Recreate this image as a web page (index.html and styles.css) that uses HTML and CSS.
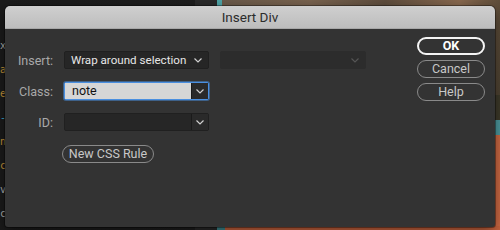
FILE: index.html
```html
<!DOCTYPE html>
<html>
<head>
<meta charset="utf-8">
<link rel="stylesheet" href="styles.css">
</head>
<body>
<div class="desktop">
  <div class="bg-photo"></div>
  <div class="bg-teal-top"></div>
  <div class="bg-right"></div>
  <div class="bg-bottom"></div>
  <div class="code">
    <span class="c1">x</span>
    <span class="c2">a</span>
    <span class="c2">e</span>
    <span class="c3">-</span>
    <span class="c2">n</span>
    <span class="c2">c</span>
    <span class="c1">v</span>
    <span class="c1">c</span>
  </div>
  <div class="dialog">
    <div class="titlebar">Insert Div</div>
    <div class="body">
      <div class="form">
        <div class="row">
          <span class="label">Insert:</span>
          <div class="select">
            <span class="value">Wrap around selection</span>
            <svg class="chev" width="8" height="5" viewBox="0 0 8 5"><polyline points="0.5,0.5 4,4 7.5,0.5" fill="none" stroke="#cfcfcf" stroke-width="1.2"/></svg>
          </div>
          <div class="select disabled">
            <span class="value"></span>
            <svg class="chev" width="8" height="5" viewBox="0 0 8 5"><polyline points="0.5,0.5 4,4 7.5,0.5" fill="none" stroke="#555" stroke-width="1.2"/></svg>
          </div>
        </div>
        <div class="row">
          <span class="label">Class:</span>
          <div class="combo focus">
            <span class="field">note</span>
            <span class="btn"><svg width="8" height="5" viewBox="0 0 8 5"><polyline points="0.5,0.5 4,4 7.5,0.5" fill="none" stroke="#d0d0d0" stroke-width="1.2"/></svg></span>
          </div>
        </div>
        <div class="row">
          <span class="label">ID:</span>
          <div class="combo">
            <span class="field"></span>
            <span class="btn"><svg width="8" height="5" viewBox="0 0 8 5"><polyline points="0.5,0.5 4,4 7.5,0.5" fill="none" stroke="#d0d0d0" stroke-width="1.2"/></svg></span>
          </div>
        </div>
        <div class="row">
          <span class="label"></span>
          <button class="pill newrule">New CSS Rule</button>
        </div>
      </div>
      <div class="buttons">
        <button class="pill primary">OK</button>
        <button class="pill">Cancel</button>
        <button class="pill">Help</button>
      </div>
    </div>
  </div>
</div>
</body>
</html>
```

FILE: styles.css
```css
* { box-sizing: border-box; }
html, body { margin: 0; padding: 0; }
body {
  width: 500px;
  height: 230px;
  overflow: hidden;
  background: #1c1c1c;
  font-family: Roboto, "Liberation Sans", Arial, sans-serif;
}
.desktop {
  position: relative;
  width: 500px;
  height: 230px;
  background: linear-gradient(90deg, #1b1b1b 0, #1e1e1e 195px, #2a2a2a 195px, #2a2a2a 217px);
}
.bg-photo {
  position: absolute;
  left: 222px; top: 0;
  width: 278px; height: 110px;
  background: linear-gradient(100deg, #6b5a4a 0%, #7a6450 30%, #5f4e3e 55%, #8a6a50 80%, #4a4030 100%);
}
.bg-teal-top {
  position: absolute;
  left: 217px; top: 0;
  width: 5px; height: 10px;
  background: #4fa6a8;
}
.bg-right {
  position: absolute;
  left: 490px; top: 95px;
  width: 10px; height: 135px;
  background: linear-gradient(180deg, #3e3a2a 0, #3e3a2a 25px, #4d9aa0 25px, #4d9aa0 40px, #cf6a44 40px);
}
.bg-bottom {
  position: absolute;
  left: 217px; top: 226px;
  width: 283px; height: 4px;
  background: linear-gradient(90deg, #3d8a8f 0, #3d8a8f 8px, #c9643e 8px);
}
.code {
  position: absolute;
  left: 0; top: 40px;
  width: 6px;
  display: flex;
  flex-direction: column;
  gap: 12px;
  font-family: "DejaVu Sans Mono", monospace;
  font-size: 10px;
  line-height: 12px;
}
.c1 { color: #b0b0b0; }
.c2 { color: #c9953a; }
.c3 { color: #3aa7d0; }

.dialog {
  position: absolute;
  left: 5px; top: 6px;
  width: 490px; height: 221px;
  background: #333333;
  border-radius: 5px 5px 3px 3px;
  box-shadow: 0 0 0 1px rgba(0,0,0,0.35), 0 4px 14px rgba(0,0,0,0.5);
  overflow: hidden;
}
.titlebar {
  height: 23px;
  background: linear-gradient(180deg, #cfcfcf 0%, #bdbdbd 100%);
  border-bottom: 1px solid #a8a8a8;
  color: #2c2c2c;
  font-size: 13.5px;
  line-height: 22px;
  text-align: center;
}
.body {
  display: flex;
  justify-content: space-between;
  padding: 8px 10px 0 0;
}
.form {
  display: flex;
  flex-direction: column;
  gap: 13px;
  padding-top: 14px;
}
.row {
  display: flex;
  align-items: center;
  gap: 11px;
  height: 18px;
}
.label {
  width: 48px;
  text-align: right;
  color: #a9a9a9;
  font-size: 12.5px;
}
.select {
  width: 145px;
  height: 18px;
  background: #262626;
  border: 1px solid #202020;
  border-radius: 2px;
  display: flex;
  align-items: center;
  justify-content: space-between;
  padding: 0 6px 0 6px;
  color: #e6e6e6;
  font-size: 11.6px;
  white-space: nowrap;
}
.select.disabled {
  width: 146px;
  background: #2c2c2c;
  border-color: #2c2c2c;
}
.combo {
  width: 145px;
  height: 18px;
  display: flex;
  border: 1px solid #202020;
  border-radius: 2px;
  background: #262626;
}
.combo .field {
  flex: 1;
  padding-left: 7px;
  font-size: 12.5px;
  line-height: 16px;
  color: #111;
}
.combo .btn {
  width: 17px;
  border-left: 1px solid #1a1a1a;
  display: flex;
  align-items: center;
  justify-content: center;
  background: #2a2a2a;
}
.combo.focus {
  border: 1px solid #4a8fe0;
  box-shadow: 0 0 0 1px rgba(74,143,224,0.5);
}
.combo.focus .field { background: #d6d6d6; }
.pill {
  font-family: inherit;
  height: 18px;
  border: 1px solid #8a8a8a;
  border-radius: 9px;
  background: transparent;
  color: #c8c8c8;
  font-size: 12.5px;
  padding: 0;
  line-height: 16px;
  white-space: nowrap;
}
.newrule {
  width: 92px;
  margin-left: -2px;
  margin-top: 2px;
}
.buttons {
  display: flex;
  flex-direction: column;
  gap: 5px;
  width: 68px;
}
.buttons .pill { width: 68px; }
.pill.primary {
  border: 2px solid #f4f4f4;
  color: #ffffff;
  font-weight: bold;
  line-height: 14px;
}
```
